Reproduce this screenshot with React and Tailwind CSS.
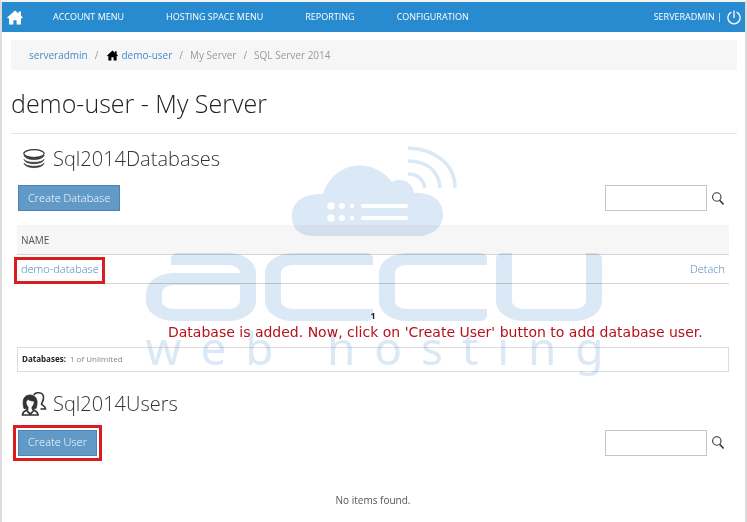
import { useState } from 'react';

const menuItems = ['Account Menu', 'Hosting Space Menu', 'Reporting', 'Configuration'];

function HomeIcon({ className }) {
  return (
    <svg viewBox="0 0 16 15" className={className} fill="currentColor" aria-hidden="true">
      <path d="M8 0.4 11.600 3.500V1.400h2.400v4.300l1.900 1.700-.9 1.200-1-.6V14.600H9.600V10.200H6.400v4.400H2V8l-1 .6-.9-1.200z" />
    </svg>
  );
}

function PowerIcon({ className }) {
  return (
    <svg viewBox="0 0 14 15" className={className} fill="none" stroke="currentColor" strokeWidth="1.3" aria-hidden="true">
      <path d="M4.4 2.2a6.1 6.1 0 1 0 5.2 0M7 .5v7.500" />
    </svg>
  );
}

function DatabaseIcon({ className }) {
  return (
    <svg viewBox="0 0 22 20" className={className} fill="none" stroke="currentColor" aria-hidden="true">
      <ellipse cx="11" cy="4.6" rx="10.200" ry="3.900" strokeWidth="1.200" />
      <path
        d="M.9 6C2 12.200 20 12.200 21.100 6C19 10.400 3 10.400 .9 6M.9 10.200C2 16.200 20 16.200 21.100 10.200C19 14.400 3 14.400 .9 10.200M.9 14C2 20.200 20 20.200 21.100 14C19 18.400 3 18.400 .9 14"
        fill="currentColor"
        strokeWidth=".6"
      />
    </svg>
  );
}

function UsersIcon({ className }) {
  return (
    <svg viewBox="0 0 26 26" className={className} fill="none" stroke="currentColor" aria-hidden="true">
      <path d="M13 4c1-3 9-3.500 9.500 2 .4 4-1.500 5-2 7 .5 2 4 1.500 4 5h-5" strokeWidth="1.600" />
      <path
        d="M3 17.500c-2-7-1-13.500 6-13.500s8.500 6.500 6 13.500l-4 .5v-2c2-2 2.500-4 2-6-3 0-5-.5-6-2-.5 1.500-1.500 2-2 2.500 0 2.500.7 4 2 5.500v2z"
        fill="currentColor"
        strokeWidth=".8"
      />
      <path d="M7 18c-1 2-5.500 1-5.500 6h15.500c0-5-4.500-4-5.500-6M6 20l3.300 3 3.200-3" strokeWidth="1.700" />
    </svg>
  );
}

function SearchIcon({ className }) {
  return (
    <svg viewBox="0 0 12 13" className={className} fill="none" stroke="currentColor" aria-hidden="true">
      <circle cx="4.800" cy="5" r="4.200" strokeWidth="1.100" />
      <path d="m7.600 8.200 3.900 4.200" strokeWidth="1.500" />
    </svg>
  );
}

function SearchBox({ label }) {
  const [value, setValue] = useState('');

  return (
    <form className="flex items-center gap-1 pr-1" onSubmit={(e) => e.preventDefault()}>
      <input
        type="text"
        aria-label={label}
        value={value}
        onChange={(e) => setValue(e.target.value)}
        className="h-[26px] w-[102px] border border-[#c4c4c4] bg-white px-2 text-[11px]"
      />
      <button type="submit" aria-label="Search" className="p-px">
        <SearchIcon className="h-[13px] w-3 text-[#333]" />
      </button>
    </form>
  );
}

function SectionTitle({ icon, children }) {
  return (
    <h2 className="flex h-8 items-center gap-[6px] pl-1 text-[20px] font-light text-[#333]">
      {icon}
      {children}
    </h2>
  );
}

function Highlight({ className }) {
  return <span className={`pointer-events-none absolute border-3 border-[#d91e20] ${className}`} />;
}

function Watermark() {
  return (
    <div className="pointer-events-none absolute inset-x-0 top-[144px] flex justify-center pl-[2px] mix-blend-multiply" aria-hidden="true">
      <div className="w-[458px]">
        <svg viewBox="0 0 166 92" className="ml-[145px] h-[92px] w-[166px]">
          <path
            d="M24 90C8 90 1 83 1 70 1 56 12 47 32 48 43 14 82 11 101 36 110 31 122 36 123 47 142 46 152 55 152 69 152 80 143 88 131 90Z"
            fill="#dbe8f5"
          />
          <g fill="none" stroke="#dbe8f5" strokeWidth="3.500">
            <path d="M117 2c27 1 47 16 47 40M117 15c19 0 31 10 32 27M117 28c9 0 15 5 17 14" />
          </g>
          <g fill="#fff">
            <circle cx="40" cy="60" r="3.800" />
            <circle cx="51" cy="60" r="3" />
            <circle cx="61" cy="60" r="2.200" />
            <circle cx="40" cy="72" r="3.800" />
            <circle cx="51" cy="72" r="3" />
            <circle cx="61" cy="72" r="2.200" />
            <rect x="70" y="58" width="47" height="4" rx="2" />
            <rect x="70" y="70" width="47" height="4" rx="2" />
          </g>
        </svg>
        <div className="mt-[15px] flex h-[68px] gap-[9px]">
          <div className="relative h-full w-[110px]">
            <div className="absolute top-0 right-0 left-[25px] h-11 rounded-l-[6px] rounded-tr-[28px_20px] border-t-12 border-r-16 border-[#dbe8f5]" />
            <div className="absolute inset-x-0 bottom-0 h-12 rounded-l-[28px_20px] rounded-br-[28px_20px] border-x-16 border-y-12 border-[#dbe8f5]" />
          </div>
          <div className="h-full w-[108px] rounded-l-[28px_20px] rounded-r-[6px] border-y-12 border-l-16 border-[#dbe8f5]" />
          <div className="ml-[-3px] h-full w-[108px] rounded-l-[28px_20px] rounded-r-[6px] border-y-12 border-l-16 border-[#dbe8f5]" />
          <div className="h-full w-[106px] rounded-t-[6px] rounded-b-[28px_20px] border-x-16 border-b-12 border-[#dbe8f5]" />
        </div>
        <div className="flex items-baseline justify-between font-['Noto_Sans',sans-serif] text-[46px] leading-[52px] text-[#dbe8f5]">
          {'web hosting'.split('').map((letter, i) => (
            <span key={i} className={letter === ' ' ? 'w-4' : undefined}>
              {letter}
            </span>
          ))}
        </div>
      </div>
    </div>
  );
}

export default function App() {
  return (
    <div className="relative min-h-screen border-x-2 border-t-2 border-x-[#dcdcdc] border-t-[#f3f3f3] bg-white font-['Open_Sans',sans-serif] text-[11px] text-[#333]">
      <nav className="flex h-[30px] items-center bg-[#288bd0] pr-1 pl-[5px] text-[9px] text-white uppercase">
        <a href="#home" aria-label="Home">
          <HomeIcon className="h-[15px] w-4" />
        </a>
        <div className="ml-[30px] flex gap-[42px]">
          {menuItems.map((item) => (
            <a key={item} href="#menu">
              {item}
            </a>
          ))}
        </div>
        <div className="ml-auto flex items-center gap-[5px]">
          <span>serveradmin |</span>
          <button type="button" aria-label="Sign out">
            <PowerIcon className="h-[15px] w-[14px]" />
          </button>
        </div>
      </nav>

      <main className="px-[9px] pt-2 pr-2">
        <ol className="flex h-[30px] items-center gap-[7px] bg-[#f6f6f6] pl-[18px] text-[10px] text-[#999]">
          <li>
            <a href="#serveradmin" className="text-[#428bca]">serveradmin</a>
          </li>
          <li>/</li>
          <li>
            <a href="#demo-user" className="flex items-center gap-[3px] pl-[2px] text-[#428bca]">
              <HomeIcon className="h-[11px] w-[11px] text-black" />
              demo-user
            </a>
          </li>
          <li>/</li>
          <li>My Server</li>
          <li>/</li>
          <li>SQL Server 2014</li>
        </ol>

        <h1 className="mt-3 border-b border-[#e5e5e5] pb-2 text-[25px] leading-[43px] font-light text-[#222]">
          demo-user - My Server
        </h1>

        <div className="pr-2 pl-[6px]">
          {/* Databases */}
          <section className="pt-[9px]">
            <SectionTitle icon={<DatabaseIcon className="h-5 w-[26px]" />}>Sql2014Databases</SectionTitle>
            <div className="mt-[10px] flex items-center justify-between pl-px">
              <button type="button" className="h-[26px] border border-[#4d84b3] bg-[#6199c7] px-[9px] font-light text-white">
                Create Database
              </button>
              <SearchBox label="Search databases" />
            </div>
            <table className="mt-[14px] w-full">
              <thead>
                <tr className="h-[29px] border-b border-[#d4d4d4] bg-[#f6f6f6] text-left text-[10px] text-[#555]">
                  <th className="px-1 pt-[2px] font-normal">NAME</th>
                  <th aria-label="Actions" />
                </tr>
              </thead>
              <tbody>
                <tr className="h-[29px] border-b border-[#d4d4d4] font-light text-[#4a86bd]">
                  <td className="px-1 pt-[2px]">
                    <span className="relative">
                      <a href="#demo-database">demo-database</a>
                      <Highlight className="-top-1 -right-[6px] -bottom-2 -left-[7px]" />
                    </span>
                  </td>
                  <td className="px-1 pt-[2px] text-right">
                    <a href="#detach">Detach</a>
                  </td>
                </tr>
              </tbody>
            </table>
            <p className="pt-6 text-center text-[9px] leading-4 font-bold text-[#222]">1</p>
            <p className="relative z-10 pl-[151px] font-['DejaVu_Sans',sans-serif] text-[14px] leading-4 whitespace-nowrap text-[#b5121b]">
              Database is added. Now, click on &apos;Create User&apos; button to add database user.
            </p>
            <p className="mt-[7px] flex h-[25px] items-center gap-1 border border-[#dcdcdc] px-1 text-[8px] text-[#888]">
              <strong className="text-[#222]">Databases:</strong> 1 of Unlimited
            </p>
          </section>

          {/* Users */}
          <section className="pt-4">
            <SectionTitle icon={<UsersIcon className="h-[26px] w-[26px]" />}>Sql2014Users</SectionTitle>
            <div className="mt-[10px] flex items-center justify-between pl-px">
              <div className="relative">
                <button type="button" className="block h-[26px] border border-[#4d84b3] bg-[#6199c7] px-[9px] font-light text-white">
                  Create User
                </button>
                <Highlight className="-inset-[5px]" />
              </div>
              <SearchBox label="Search users" />
            </div>
            <p className="pt-9 text-center text-[10px] leading-4 text-[#555]">No items found.</p>
          </section>
        </div>
      </main>

      <Watermark />
    </div>
  );
}
